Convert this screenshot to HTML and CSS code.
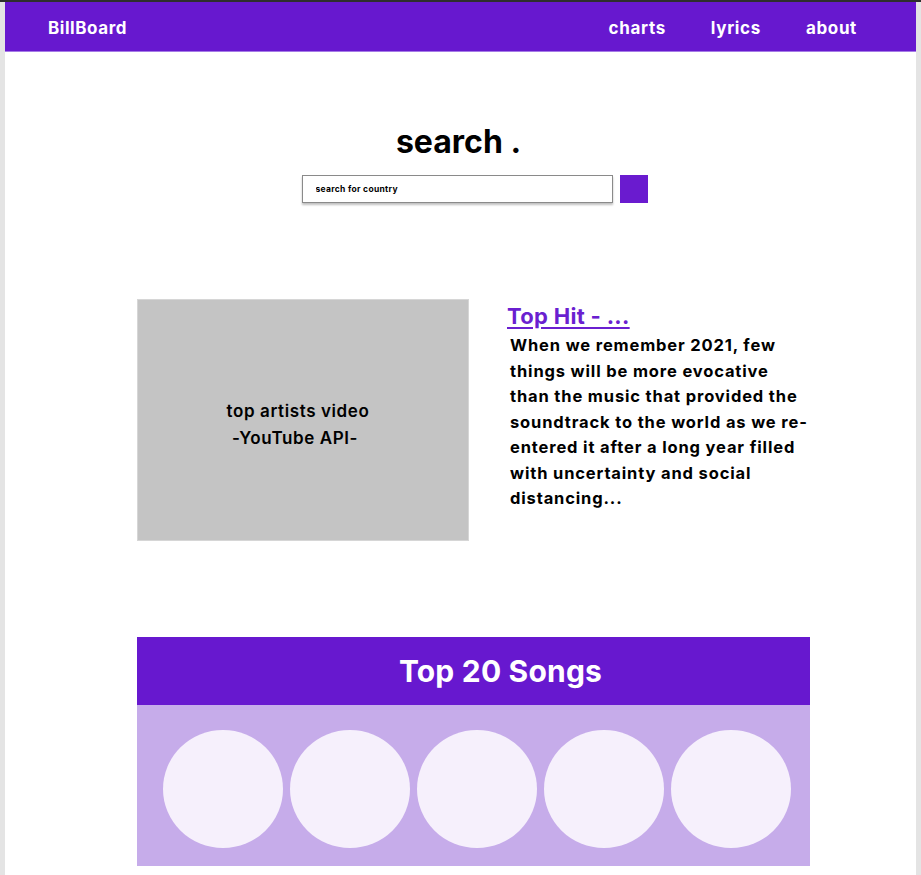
FILE: index.html
```html
<!DOCTYPE html>
<html lang="en">
<head>
<meta charset="utf-8">
<title>BillBoard</title>
<link rel="stylesheet" href="styles.css">
</head>
<body>
<div class="page">
  <header class="nav">
    <div class="brand">BillBoard</div>
    <nav class="links">
      <a href="#">charts</a>
      <a href="#">lyrics</a>
      <a href="#">about</a>
    </nav>
  </header>

  <section class="search">
    <h1 class="search-title">search .</h1>
    <form class="search-form">
      <input class="search-input" type="text" placeholder="search for country">
      <button class="search-btn" type="button"></button>
    </form>
  </section>

  <section class="feature">
    <div class="video">
      <p>top artists video<br><span class="api">-YouTube API-</span></p>
    </div>
    <div class="hit">
      <a class="hit-title" href="#">Top Hit - ...</a>
      <p class="hit-text">When we remember 2021, few<br>things will be more evocative<br>than the music that provided the<br>soundtrack to the world as we re-<br>entered it after a long year filled<br>with uncertainty and social<br>distancing...</p>
    </div>
  </section>

  <section class="songs">
    <h2 class="songs-title">Top 20 Songs</h2>
    <div class="songs-row">
      <div class="disc"></div>
      <div class="disc"></div>
      <div class="disc"></div>
      <div class="disc"></div>
      <div class="disc"></div>
    </div>
  </section>
</div>
</body>
</html>
```
FILE: styles.css
```css
* { box-sizing: border-box; }
html, body { margin: 0; padding: 0; }
body {
  background: #e4e4e4;
  border-top: 2px solid #2e2e2e;
  font-family: Inter, "DejaVu Sans", sans-serif;
  color: #000;
  height: 875px;
  overflow: hidden;
}
.page {
  margin: 0 5px;
  background: #fff;
  min-height: 873px;
}
.nav {
  height: 50px;
  background: #6718cf;
  border-bottom: 1px solid #a57be6;
  display: flex;
  align-items: center;
  justify-content: space-between;
  padding: 2px 59px 0 43px;
}
.brand {
  color: #fff;
  font-weight: 700;
  font-size: 17px;
  letter-spacing: 0.55px;
}
.links { display: flex; gap: 45px; }
.links a {
  color: #fff;
  text-decoration: none;
  font-weight: 700;
  font-size: 17px;
  letter-spacing: 0.65px;
}
.search {
  display: flex;
  flex-direction: column;
  align-items: center;
  padding-top: 70px;
}
.search-title {
  margin: 0;
  font-size: 32px;
  font-weight: 700;
  line-height: 40px;
  padding-right: 4px;
}
.search-form {
  display: flex;
  gap: 7px;
  margin-top: 13px;
  padding-left: 28px;
}
.search-input {
  width: 311px;
  height: 28px;
  border: 1px solid #8a8a8a;
  box-shadow: 0 2px 2px rgba(0,0,0,0.25);
  padding: 0 13px;
  font-family: inherit;
  font-size: 8.5px;
  letter-spacing: 0.3px;
  font-weight: 700;
  outline: none;
}
.search-input::placeholder { color: #000; }
.search-btn {
  width: 28px;
  height: 28px;
  border: none;
  background: #6a1bcf;
  padding: 0;
}
.feature {
  display: flex;
  margin-top: 96px;
  padding-left: 132px;
}
.video {
  width: 332px;
  height: 242px;
  background: #c4c4c4;
  border: 1px solid #d6d6d6;
  display: flex;
  align-items: center;
  justify-content: center;
  padding: 10px 10px 0 0;
}
.video p {
  margin: 0;
  text-align: center;
  font-size: 17px;
  font-weight: 600;
  line-height: 27px;
  letter-spacing: 0.6px;
}
.api { margin-right: 6px; }
.hit {
  margin-left: 38px;
  padding-top: 2px;
}
.hit-title {
  display: inline-block;
  color: #6a1fd0;
  font-size: 22px;
  font-weight: 700;
  line-height: 30px;
  letter-spacing: 0.3px;
  text-decoration: underline;
  text-decoration-thickness: 2px;
  text-underline-offset: 3px;
}
.hit-text {
  margin: 2px 0 0 3px;
  font-size: 16.5px;
  font-weight: 700;
  line-height: 25.5px;
  letter-spacing: 0.85px;
  white-space: nowrap;
}
.songs {
  margin: 96px 0 0 132px;
  width: 673px;
}
.songs-title {
  margin: 0;
  height: 68px;
  background: #6718cf;
  color: #fff;
  font-size: 30px;
  font-weight: 700;
  letter-spacing: 0.2px;
  display: flex;
  align-items: center;
  justify-content: center;
  padding-left: 54px;
}
.songs-row {
  background: #c6acea;
  height: 161px;
  display: flex;
  gap: 7px;
  padding: 25px 0 0 26px;
}
.disc {
  width: 120px;
  height: 118px;
  border-radius: 50%;
  background: #f6f0fc;
}
```
